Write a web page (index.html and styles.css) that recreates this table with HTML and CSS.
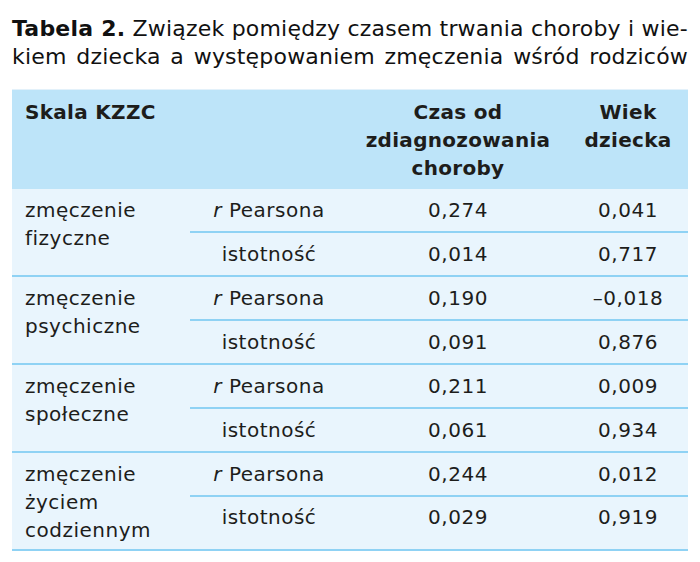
FILE: index.html
```html
<!DOCTYPE html>
<html lang="pl">
<head>
<meta charset="utf-8">
<link rel="stylesheet" href="styles.css">
</head>
<body>
<p class="caption"><b>Tabela 2.</b> Związek pomiędzy czasem trwania choroby i wie-<br>kiem dziecka a występowaniem zmęczenia wśród rodziców</p>
<table class="data">
  <colgroup>
    <col class="c1"><col class="c2"><col class="c3"><col class="c4">
  </colgroup>
  <thead>
    <tr>
      <th class="left">Skala KZZC</th>
      <th></th>
      <th>Czas od<br>zdiagnozowania<br>choroby</th>
      <th>Wiek<br>dziecka</th>
    </tr>
  </thead>
  <tbody>
    <tr class="top">
      <td rowspan="2" class="label">zmęczenie<br>fizyczne</td>
      <td><i>r</i> Pearsona</td><td>0,274</td><td>0,041</td>
    </tr>
    <tr class="bot"><td>istotność</td><td>0,014</td><td>0,717</td></tr>
    <tr class="top">
      <td rowspan="2" class="label">zmęczenie<br>psychiczne</td>
      <td><i>r</i> Pearsona</td><td>0,190</td><td>–0,018</td>
    </tr>
    <tr class="bot"><td>istotność</td><td>0,091</td><td>0,876</td></tr>
    <tr class="top">
      <td rowspan="2" class="label">zmęczenie<br>społeczne</td>
      <td><i>r</i> Pearsona</td><td>0,211</td><td>0,009</td>
    </tr>
    <tr class="bot"><td>istotność</td><td>0,061</td><td>0,934</td></tr>
    <tr class="top">
      <td rowspan="2" class="label last">zmęczenie<br>życiem<br>codziennym</td>
      <td><i>r</i> Pearsona</td><td>0,244</td><td>0,012</td>
    </tr>
    <tr class="bot tall"><td>istotność</td><td>0,029</td><td>0,919</td></tr>
  </tbody>
</table>
</body>
</html>
```
FILE: styles.css
```css
html, body {
  margin: 0;
  padding: 0;
  background: #ffffff;
}
body {
  font-family: "DejaVu Sans", "Liberation Sans", sans-serif;
  color: #1d1d1b;
  width: 700px;
}
.caption {
  margin: 0;
  padding: 15px 12px 0 12px;
  font-size: 22px;
  line-height: 28px;
  text-align: justify;
  text-align-last: justify;
  letter-spacing: 0.2px;
  color: #111;
}
.caption b {
  font-weight: bold;
}
.data {
  margin: 18px 0 0 12px;
  width: 676px;
  border-collapse: collapse;
  table-layout: fixed;
  font-size: 20px;
  line-height: 28px;
  letter-spacing: 0.5px;
  border-top: 1px solid #e3f1fa;
}
.c1 { width: 178px; }
.c2 { width: 158px; }
.c3 { width: 220px; }
.c4 { width: 120px; }
.data thead th {
  background: #bde4f9;
  height: 99px;
  box-sizing: border-box;
  padding: 8px 0 0 0;
  vertical-align: top;
  text-align: center;
  font-weight: bold;
  font-size: 20px;
  letter-spacing: 0.3px;
}
.data thead th.left {
  text-align: left;
  padding-left: 13px;
}
.data tbody {
  background: #e9f5fd;
}
.data td {
  padding: 0;
  text-align: center;
  vertical-align: middle;
  height: 42px;
  border-bottom: 2px solid #8fd2f4;
}
.data td.label {
  text-align: left;
  vertical-align: top;
  padding: 7px 0 0 13px;
}
.data tr.tall td {
  height: 46px;
  vertical-align: top;
  padding-top: 6px;
}
.data tr.tall td.label {
  padding-top: 7px;
}
.data i {
  font-style: italic;
}
```
